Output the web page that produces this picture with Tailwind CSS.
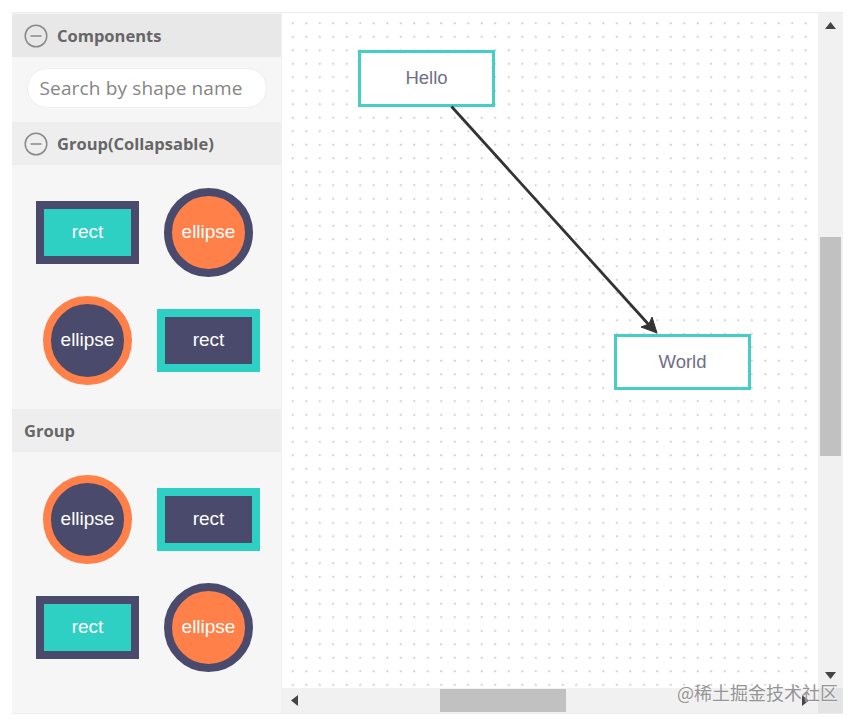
<!DOCTYPE html>
<html lang="en">
<head>
  <meta charset="UTF-8" />
  <title>Diagram Symbol Palette</title>
  <script src="https://cdn.jsdelivr.net/npm/@tailwindcss/browser@4"></script>
</head>
<body class="bg-white w-[858px] h-[723px] overflow-hidden font-['Liberation_Sans',sans-serif]">

  <div class="relative ml-3 mt-3 w-[831px] h-[702px] flex border-t border-b border-[#ececec]">

    <!-- palette -->
    <div class="w-[270px] shrink-0 bg-[#f6f6f7] pt-px border-r border-[#f0f0f0] font-['Open_Sans',sans-serif]">
      <div class="h-[43px] bg-[#e8e8e8] flex items-center pl-3 gap-[9px]">
        <svg width="24" height="24" viewBox="0 0 24 24" fill="none" stroke="#8a8a8a" stroke-width="1.5"><circle cx="12" cy="12" r="10.8"/><path d="M6.5 12h11"/></svg>
        <span class="text-[16.500px] font-bold text-[#666] pt-[2px]">Components</span>
      </div>
      <div class="h-[65px] pt-[11px] flex justify-center">
        <input type="text" placeholder="Search by shape name" class="w-[240px] h-[40px] px-3 rounded-[20px] bg-white border border-[#eeeeee] text-[19px] tracking-[0.15px] placeholder:text-[#858585] outline-none" />
      </div>
      <div class="h-[43px] bg-[#eeeeee] flex items-center pl-3 gap-[9px]">
        <svg width="24" height="24" viewBox="0 0 24 24" fill="none" stroke="#8a8a8a" stroke-width="1.5"><circle cx="12" cy="12" r="10.8"/><path d="M6.5 12h11"/></svg>
        <span class="text-[16.500px] font-bold text-[#666] pt-[2px]">Group(Collapsable)</span>
      </div>
      <div class="grid grid-cols-[121px_121px] auto-rows-[108px] pl-[15px] pt-[13px] pb-[15px] text-[19px] text-white font-['Liberation_Sans',sans-serif]">
        <div class="flex items-center justify-center"><div class="w-[103px] h-[63px] bg-[#2fd0c4] border-[8px] border-[#4a4a6c] flex items-center justify-center">rect</div></div>
        <div class="flex items-center justify-center"><div class="w-[89px] h-[89px] rounded-full bg-[#ff8048] border-[8px] border-[#4a4a6c] flex items-center justify-center">ellipse</div></div>
        <div class="flex items-center justify-center"><div class="w-[89px] h-[89px] rounded-full bg-[#4a4a6c] border-[8px] border-[#ff8048] flex items-center justify-center">ellipse</div></div>
        <div class="flex items-center justify-center"><div class="w-[103px] h-[63px] bg-[#4a4a6c] border-[8px] border-[#2fd0c4] flex items-center justify-center">rect</div></div>
      </div>
      <div class="h-[43px] bg-[#eeeeee] flex items-center pl-3">
        <span class="text-[16.500px] font-bold text-[#666] pt-[2px]">Group</span>
      </div>
      <div class="grid grid-cols-[121px_121px] auto-rows-[108px] pl-[15px] pt-[13px] text-[19px] text-white font-['Liberation_Sans',sans-serif]">
        <div class="flex items-center justify-center"><div class="w-[89px] h-[89px] rounded-full bg-[#4a4a6c] border-[8px] border-[#ff8048] flex items-center justify-center">ellipse</div></div>
        <div class="flex items-center justify-center"><div class="w-[103px] h-[63px] bg-[#4a4a6c] border-[8px] border-[#2fd0c4] flex items-center justify-center">rect</div></div>
        <div class="flex items-center justify-center"><div class="w-[103px] h-[63px] bg-[#2fd0c4] border-[8px] border-[#4a4a6c] flex items-center justify-center">rect</div></div>
        <div class="flex items-center justify-center"><div class="w-[89px] h-[89px] rounded-full bg-[#ff8048] border-[8px] border-[#4a4a6c] flex items-center justify-center">ellipse</div></div>
      </div>
    </div>

    <!-- canvas + scrollbars -->
    <div class="flex-1 grid grid-cols-[536px_25px] grid-rows-[675px_25px]">
      <div class="relative overflow-hidden bg-white bg-[radial-gradient(circle,#c6c6c6_0.6px,transparent_1px)] bg-[size:13.5px_13.5px] bg-[position:4px_3.5px]">
        <div class="absolute left-[76px] top-[37px] w-[137px] h-[57px] bg-white border-[3px] border-[#45cfc4] flex items-center justify-center pb-[2px] text-[18.500px] text-[#6f6f85]">Hello</div>
        <div class="absolute left-[332px] top-[321px] w-[137px] h-[56px] bg-white border-[3px] border-[#45cfc4] flex items-center justify-center text-[18.500px] text-[#6f6f85]">World</div>
        <svg class="absolute inset-0" width="536" height="675" fill="none">
          <path d="M169.500 93.500L368 313" stroke="#333" stroke-width="2.800"/>
          <path d="M375 320L359 314L367 311L370 304Z" fill="#333" stroke="#333"/>
        </svg>
      </div>
      <!-- vertical scrollbar -->
      <div class="relative bg-[#f1f1f1] flex flex-col items-center justify-between py-[9px]">
        <svg width="11" height="7" viewBox="0 0 11 7" class="fill-[#444]"><path d="M5.500 0L11 7H0Z"/></svg>
        <div class="absolute left-[2px] top-[224px] w-[21px] h-[219px] bg-[#c1c1c1]"></div>
        <svg width="11" height="7" viewBox="0 0 11 7" class="fill-[#444]"><path d="M0 0H11L5.500 7Z"/></svg>
      </div>
      <!-- horizontal scrollbar -->
      <div class="relative bg-[#f1f1f1] flex items-center justify-between px-[9px]">
        <svg width="7" height="11" viewBox="0 0 7 11" class="fill-[#444]"><path d="M7 0V11L0 5.500Z"/></svg>
        <div class="absolute left-[158px] top-[1px] w-[126px] h-[23px] bg-[#c1c1c1]"></div>
        <svg width="7" height="11" viewBox="0 0 7 11" class="fill-[#444]"><path d="M0 0L7 5.500L0 11Z"/></svg>
      </div>
      <div class="bg-[#e4e4e4]"></div>
    </div>

    <div class="absolute right-[5px] top-[666px] text-[18px] leading-[26px] text-[#949494] whitespace-nowrap font-['Noto_Sans_CJK_SC',sans-serif] [text-shadow:0_0_2px_#fff]">@稀土掘金技术社区</div>
  </div>

</body>
</html>
